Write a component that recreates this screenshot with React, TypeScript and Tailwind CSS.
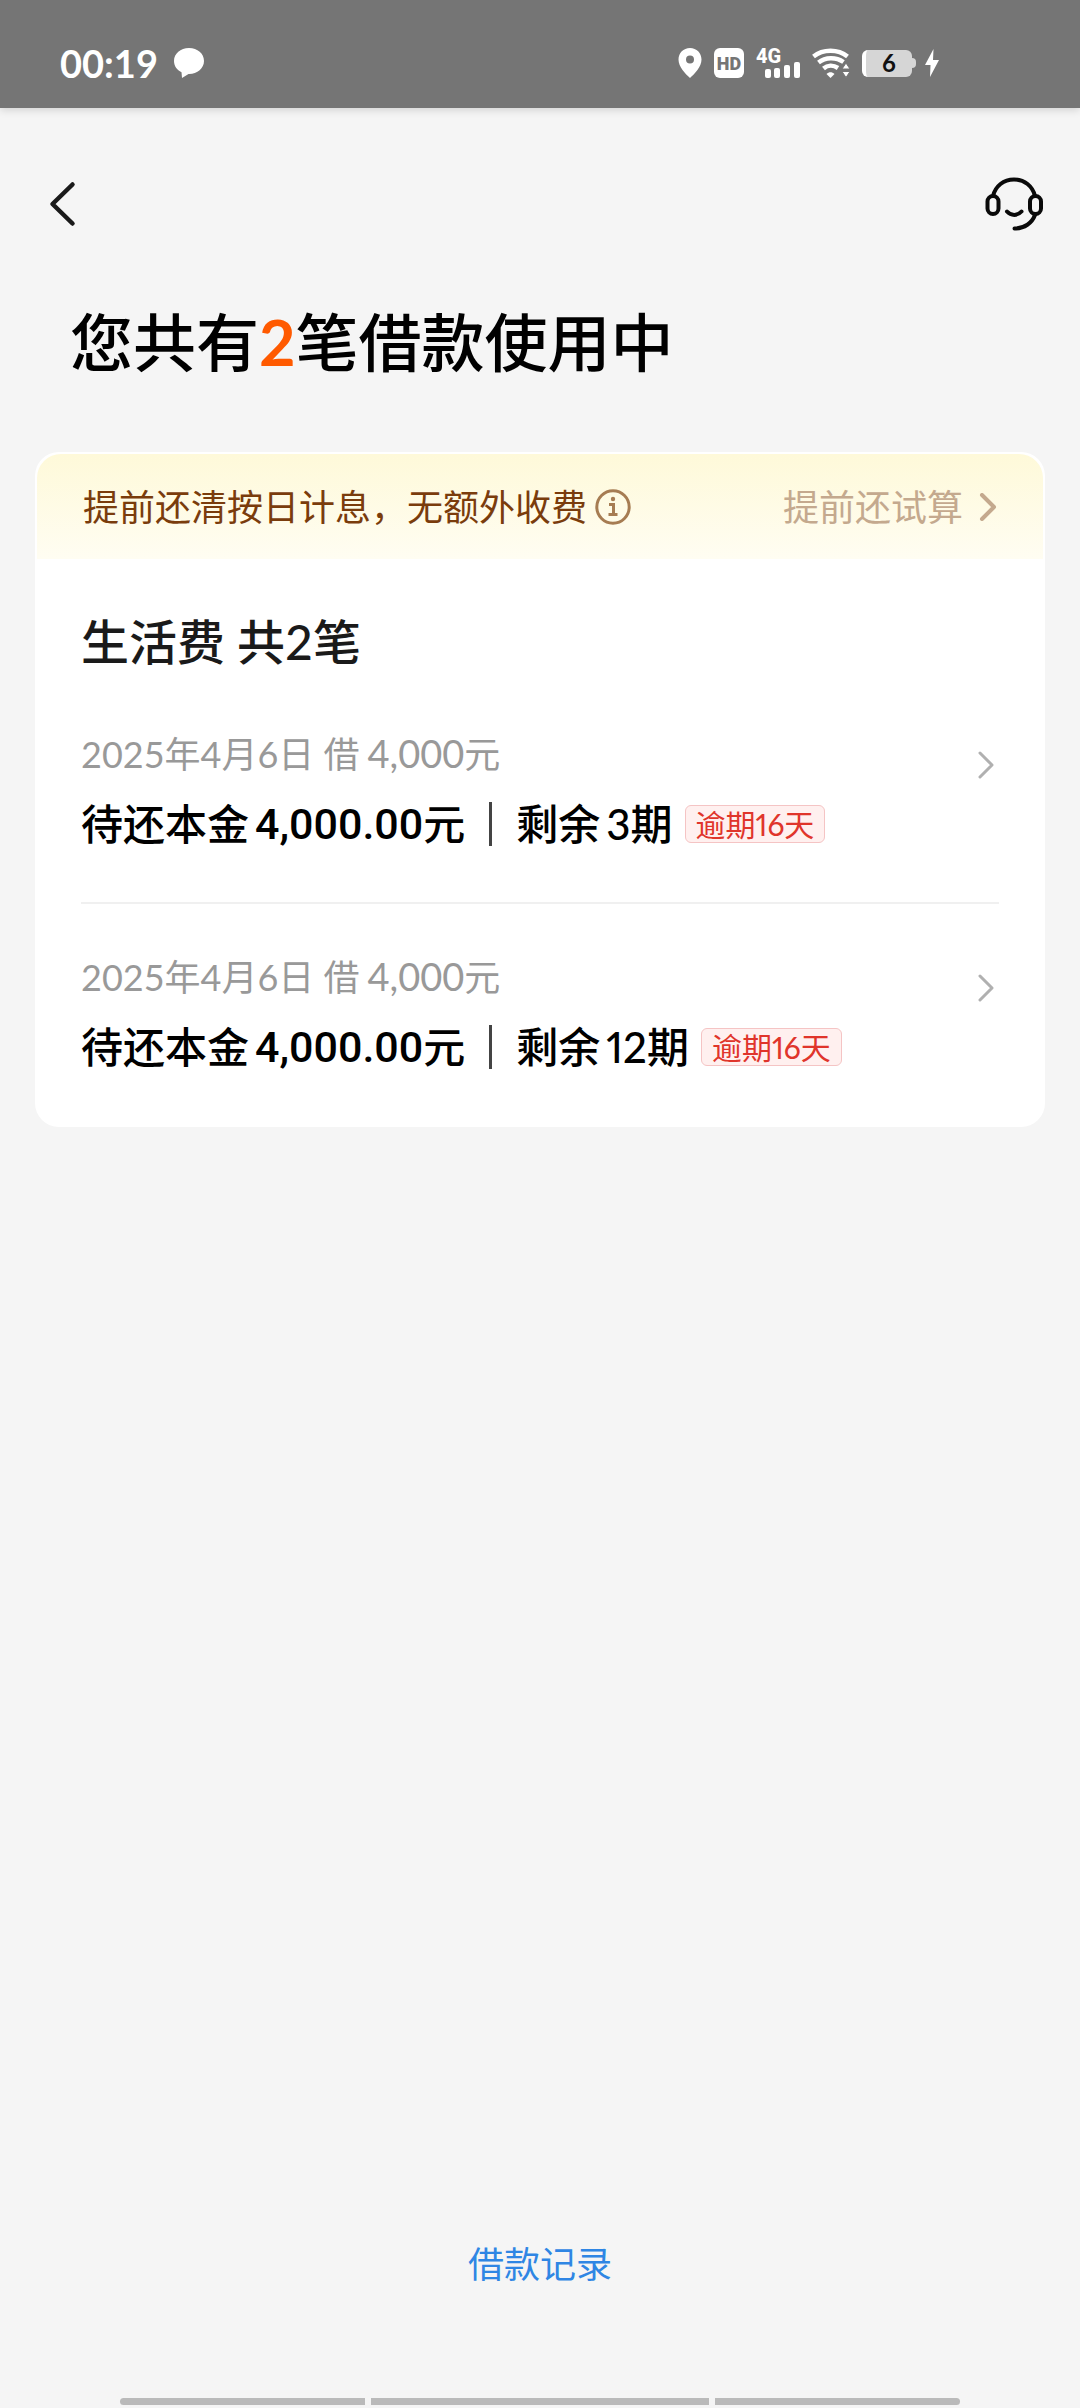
import React from 'react';

const loans = [
  { id: 1, date: '2025年4月6日', amount: '4,000', principal: '4,000.00', periods: '3', overdue: 16 },
  { id: 2, date: '2025年4月6日', amount: '4,000', principal: '4,000.00', periods: '12', overdue: 16 },
];

const StatusBar = () => {
  return (
    <div className="h-27 flex items-center justify-between bg-[#757575] pl-15 pr-35 pt-[18px] text-white shadow-[0_2px_8px_rgba(0,0,0,0.15)]">
      <div className="flex items-center gap-4">
        <span className="text-[38px] leading-10 font-bold">00:19</span>
        <svg className="w-[30px] h-[30px]" viewBox="0 0 30 30" fill="currentColor">
          <path d="M15 0C6.500 0 0 5.600 0 13c0 5 3 9 7.500 11.300L8 30l6.500-4C23 26.300 30 20.500 30 13S23.500 0 15 0z" />
        </svg>
      </div>
      <div className="flex items-center gap-3">
        <svg className="w-6 h-[30px]" viewBox="0 0 24 30" fill="currentColor">
          <path fillRule="evenodd" d="M12 0C5.400 0 .5 5 .5 11.500.5 19 7.500 26 12 30c4.500-4 11.500-11 11.500-18.500C23.500 5 18.600 0 12 0zm0 7.500a4 4 0 1 1 0 8 4 4 0 0 1 0-8z" />
        </svg>
        <span className="flex items-center justify-center w-[30px] h-[30px] rounded-md bg-white font-[Roboto] text-[18px] font-black text-[#757575]">HD</span>
        <div className="relative w-11 h-[30px]">
          <span className="absolute left-0 -top-1 font-[Roboto] text-xl leading-6 font-extrabold">4G</span>
          <svg className="w-full h-full" viewBox="0 0 44 30" fill="currentColor">
            <rect x="9" y="21" width="6" height="9" rx="2" />
            <rect x="18" y="20" width="6" height="10" rx="2" />
            <rect x="28" y="17" width="6" height="13" rx="2" />
            <rect x="38" y="14" width="6" height="16" rx="2" />
          </svg>
        </div>
        <svg className="w-[38px] h-[30px]" viewBox="0 0 38 30">
          <g fill="none" stroke="currentColor" strokeWidth="4.500">
            <path d="M1.500 8.500C11 .8 26 .8 35.500 8.500" />
            <path d="M6.500 14.500c7-5.600 17.500-5.600 25-.5" />
            <path d="M11.500 20.500c4-3.400 9.500-3.800 14.500-.5" />
          </g>
          <path d="M14.500 26c2.500-2.200 5.500-2.200 8 0l-4 4z" fill="currentColor" />
          <path d="M30 21l4-6 4 6zM30 23.500h8l-4 6z" fill="currentColor" stroke="#757575" strokeWidth="1" />
        </svg>
        <div className="flex items-center text-[#d6d6d6]">
          <span className="flex items-center justify-center w-[50px] h-[27px] rounded-md border-l-4 border-white bg-current">
            <span className="text-2xl leading-6 font-bold text-[#111111]">6</span>
          </span>
          <span className="w-1 h-[10px] rounded-r-sm bg-current"></span>
        </div>
        <svg className="-ml-1 w-4 h-7" viewBox="0 0 16 28" fill="currentColor">
          <path d="M9.500 0L1 16h5.500L6 28l9-17H9z" />
        </svg>
      </div>
    </div>
  );
};

const Chevron = ({ className, width }: { className: string; width: number }) => {
  return (
    <svg className={className} viewBox="0 0 18 28" fill="none" stroke="currentColor" strokeWidth={width} strokeLinecap="round" strokeLinejoin="round">
      <path d="M3 2l12 12L3 26" />
    </svg>
  );
};

const App = () => {
  return (
    <div className="min-h-screen flex flex-col bg-[#f5f5f5] font-[Lato,'Noto_Sans_CJK_SC',sans-serif] text-black">
      <StatusBar />

      <header className="flex items-center justify-between pt-16 pl-12 pr-9">
        <button type="button" aria-label="返回" className="h-16 flex items-center">
          <svg className="w-7 h-12" viewBox="0 0 28 48" fill="none" stroke="#1a1a1a" strokeWidth="4.500" strokeLinecap="round" strokeLinejoin="round">
            <path d="M24.500 4.500L4.500 24l20 19.500" />
          </svg>
        </button>
        <button type="button" aria-label="客服" className="h-16 flex items-center">
          <svg className="w-[60px] h-14" viewBox="0 0 60 56" fill="none" stroke="#0a0a0a" strokeWidth="4" strokeLinecap="round">
            <path d="M9 20C11.500 10 19.500 3.500 30 3.500S48.500 10 51 20" />
            <rect x="3.500" y="20" width="11" height="18" rx="5.500" />
            <rect x="46" y="20" width="11" height="18" rx="5.500" />
            <path d="M51 39c-3 8-10.500 13.500-20.500 13.500" />
            <path d="M23 35.500c4 4.500 10.500 4.500 14.500 0" />
          </svg>
        </button>
      </header>

      <h1 className="px-[70px] pt-15 text-[63px] leading-[92px] font-medium">
        您共有<span className="font-bold text-[#ff5a00]">2</span>笔借款使用中
      </h1>

      <main className="mx-[35px] mt-16 rounded-3xl bg-white p-[2px]">
        <div className="flex items-center justify-between h-[105px] rounded-t-3xl bg-gradient-to-b from-[#fef9d9] to-[#fffdf2] px-[46px]">
          <div className="flex items-center gap-2 text-[36px] leading-[52px] text-[#7a3c0c]">
            提前还清按日计息，无额外收费
            <svg className="w-9 h-9" viewBox="0 0 36 36" fill="none" stroke="#a67c52" strokeWidth="3">
              <circle cx="18" cy="18" r="16.200" />
              <circle cx="18" cy="10" r="2.200" fill="#a67c52" stroke="none" />
              <path d="M14 15.500h4.500V25M13.500 25.500h9" />
            </svg>
          </div>
          <a href="#trial" className="flex items-center gap-4 text-[36px] leading-[52px] text-[#c4a98e]">
            提前还试算
            <Chevron className="w-[18px] h-7" width={4} />
          </a>
        </div>

        <section className="px-11 pt-12">
          <h2 className="mb-1 text-[48px] leading-[70px] font-medium text-[#1a1a1a]">生活费 共2笔</h2>
          <ul className="divide-y-2 divide-[#f0f0f0]">
            {loans.map((loan) => (
              <li key={loan.id}>
                <a href={`#loan-${loan.id}`} className="flex items-start justify-between pt-[46px] pb-11">
                  <div>
                    <p className="text-[36px] leading-[52px] text-[#999999]">
                      {loan.date} 借<span className="ml-2 text-[38px]">{loan.amount}</span>元
                    </p>
                    <div className="flex items-center mt-[10px] text-[42px] leading-[68px] font-medium">
                      <span>待还本金</span>
                      <span className="ml-[6px] font-[Roboto] text-[43px]">{loan.principal}</span>
                      <span>元</span>
                      <span className="mx-6 w-[3px] h-11 bg-[#444444]"></span>
                      <span>剩余</span>
                      <span className="ml-[6px] proportional-nums">{loan.periods}</span>
                      <span>期</span>
                      <span className="ml-3 rounded-md border border-[#f5c4c4] bg-[#fff0ef] px-[10px] text-[30px] leading-9 font-normal text-[#e0352b] proportional-nums">
                        逾期{loan.overdue}天
                      </span>
                    </div>
                  </div>
                  <Chevron className="w-[18px] h-7 mt-6 mr-1 text-[#b0b0b0]" width={3} />
                </a>
              </li>
            ))}
          </ul>
        </section>
      </main>

      <footer className="mt-auto flex flex-col items-center">
        <a href="#records" className="text-[36px] leading-[52px] text-[#2f86e4]">借款记录</a>
        <div className="flex gap-[6px] w-full px-30 mt-27 pb-[3px]">
          <span className="flex-[245] h-[7px] rounded-l-full bg-[#bababa]"></span>
          <span className="flex-[338] h-[7px] bg-[#bababa]"></span>
          <span className="flex-[245] h-[7px] rounded-r-full bg-[#bababa]"></span>
        </div>
      </footer>
    </div>
  );
};

export default App;
